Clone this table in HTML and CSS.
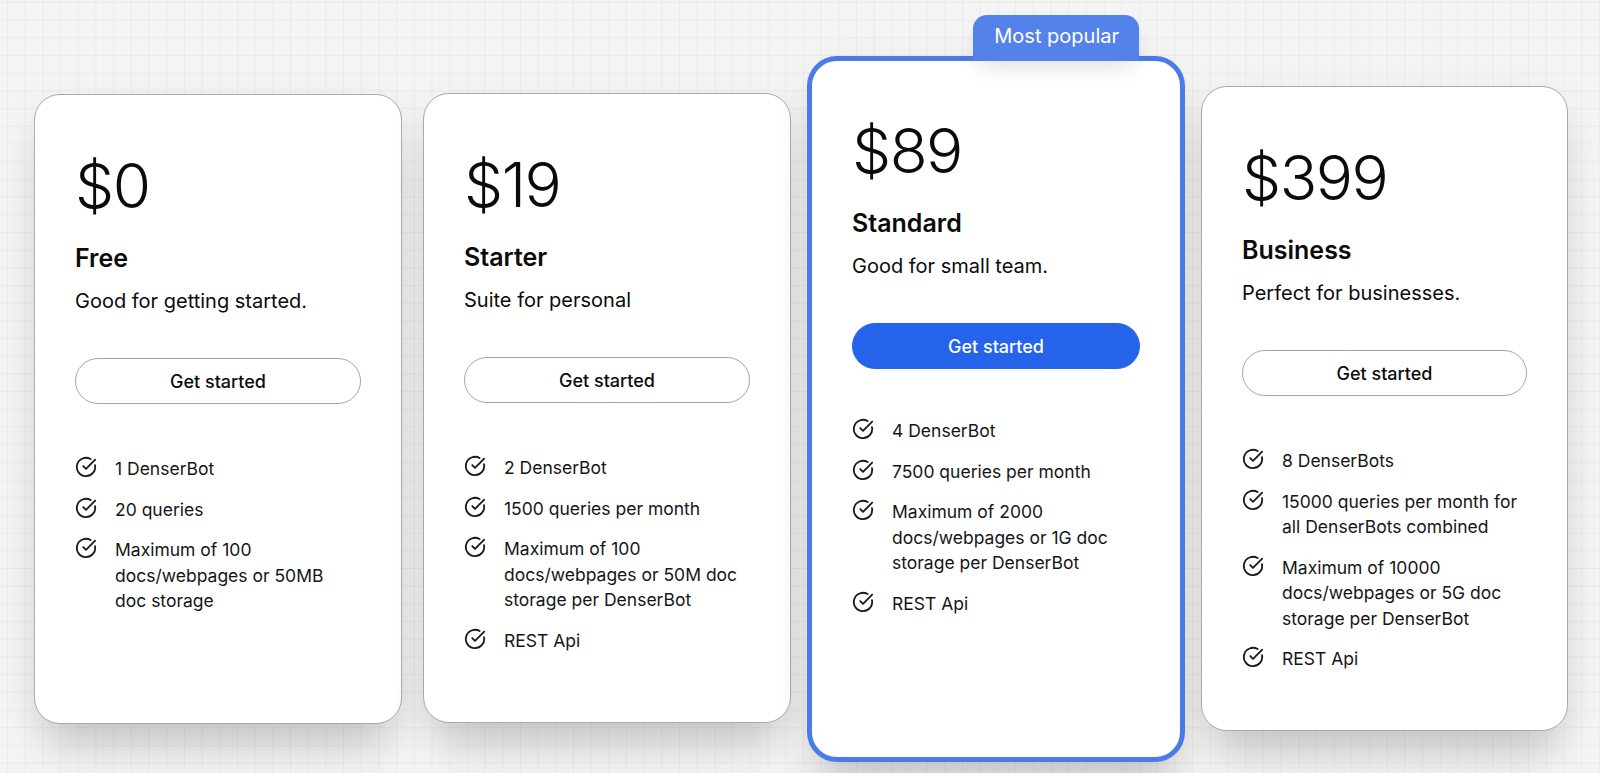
FILE: index.html
```html
<!DOCTYPE html>
<html lang="en">
<head>
<meta charset="utf-8">
<title>Pricing</title>
<link rel="stylesheet" href="styles.css">
</head>
<body>
<svg width="0" height="0" style="position:absolute">
  <symbol id="chk" viewBox="0 0 24 24"><path d="M21.801 10A10 10 0 1 1 17 3.335" fill="none" stroke="currentColor" stroke-width="2" stroke-linecap="round" stroke-linejoin="round"/><path d="m9 11 3 3L22 4" fill="none" stroke="currentColor" stroke-width="2" stroke-linecap="round" stroke-linejoin="round"/></symbol>
</svg>
<main class="plans">
  <section class="card card-free">
    <div class="price">$0</div>
    <h2 class="name">Free</h2>
    <p class="desc">Good for getting started.</p>
    <button class="btn">Get started</button>
    <ul class="features">
      <li><svg class="ic"><use href="#chk"/></svg><span>1 DenserBot</span></li>
      <li><svg class="ic"><use href="#chk"/></svg><span>20 queries</span></li>
      <li><svg class="ic"><use href="#chk"/></svg><span>Maximum of 100 docs/webpages or 50MB doc storage</span></li>
    </ul>
  </section>
  <section class="card card-starter">
    <div class="price">$19</div>
    <h2 class="name">Starter</h2>
    <p class="desc">Suite for personal</p>
    <button class="btn">Get started</button>
    <ul class="features">
      <li><svg class="ic"><use href="#chk"/></svg><span>2 DenserBot</span></li>
      <li><svg class="ic"><use href="#chk"/></svg><span>1500 queries per month</span></li>
      <li><svg class="ic"><use href="#chk"/></svg><span>Maximum of 100 docs/webpages or 50M doc storage per DenserBot</span></li>
      <li><svg class="ic"><use href="#chk"/></svg><span>REST Api</span></li>
    </ul>
  </section>
  <section class="card card-popular">
    <div class="badge">Most popular</div>
    <div class="price">$89</div>
    <h2 class="name">Standard</h2>
    <p class="desc">Good for small team.</p>
    <button class="btn btn-primary">Get started</button>
    <ul class="features">
      <li><svg class="ic"><use href="#chk"/></svg><span>4 DenserBot</span></li>
      <li><svg class="ic"><use href="#chk"/></svg><span>7500 queries per month</span></li>
      <li><svg class="ic"><use href="#chk"/></svg><span>Maximum of 2000 docs/webpages or 1G doc storage per DenserBot</span></li>
      <li><svg class="ic"><use href="#chk"/></svg><span>REST Api</span></li>
    </ul>
  </section>
  <section class="card card-business">
    <div class="price">$399</div>
    <h2 class="name">Business</h2>
    <p class="desc">Perfect for businesses.</p>
    <button class="btn">Get started</button>
    <ul class="features">
      <li><svg class="ic"><use href="#chk"/></svg><span>8 DenserBots</span></li>
      <li><svg class="ic"><use href="#chk"/></svg><span>15000 queries per month for all DenserBots combined</span></li>
      <li><svg class="ic"><use href="#chk"/></svg><span>Maximum of 10000 docs/webpages or 5G doc storage per DenserBot</span></li>
      <li><svg class="ic"><use href="#chk"/></svg><span>REST Api</span></li>
    </ul>
  </section>
</main>
</body>
</html>
```
FILE: styles.css
```css
* { box-sizing: border-box; }
html, body { margin: 0; padding: 0; }
body {
  width: 1600px;
  height: 773px;
  overflow: hidden;
  font-family: Inter, "Noto Sans", "Liberation Sans", sans-serif;
  color: #0b0b0c;
  background-color: #f4f4f4;
  background-image:
    linear-gradient(to right, rgba(0,0,0,0.035) 1px, transparent 1px),
    linear-gradient(to bottom, rgba(0,0,0,0.035) 1px, transparent 1px);
  background-size: 17.7px 17.7px;
  background-position: 7px 2px;
}
.plans {
  display: flex;
  align-items: flex-start;
  gap: 16px;
  padding-left: 34px;
}
.card {
  position: relative;
  width: 368px;
  height: 630px;
  padding: 60px 40px 0;
  background: #fff;
  border: 1px solid #a9a9b0;
  border-radius: 26px;
  box-shadow: 0 36px 44px -14px rgba(0,0,0,0.16), 0 10px 40px rgba(0,0,0,0.06);
}
.card-free { margin-top: 94px; margin-right: 5px; }
.card-starter { margin-top: 93px; }
.card-popular {
  margin-top: 56px;
  width: 378px;
  height: 706px;
  padding-top: 59px;
  border: 5px solid #4b7be6;
  border-radius: 30px;
}
.card-business { margin-top: 86px; width: 367px; height: 645px; }
.badge {
  position: absolute;
  top: -46px;
  right: 41px;
  height: 46px;
  padding: 7px 20px 0 21px;
  background: #5383ea;
  color: #fff;
  font-size: 20px;
  line-height: 28px;
  border-radius: 14px 14px 0 0;
  box-shadow: 0 10px 22px -6px rgba(0,0,0,0.14);
}
.price {
  font-size: 62px;
  line-height: 62px;
  font-weight: 300;
  letter-spacing: -1.5px;
}
.name {
  margin: 26px 0 0;
  font-size: 25px;
  line-height: 30px;
  font-weight: 600;
}
.desc {
  margin: 14px 0 0;
  font-size: 20px;
  line-height: 28px;
}
.btn {
  display: block;
  width: 100%;
  height: 46px;
  margin-top: 43px;
  border: 1px solid #a4a4aa;
  border-radius: 23px;
  background: #fff;
  color: #0b0b0c;
  font-family: inherit;
  font-size: 18px;
  font-weight: 500;
}
.btn-primary {
  background: #2563eb;
  border-color: #2563eb;
  color: #fff;
}
.features {
  list-style: none;
  margin: 52px 0 0;
  padding: 0;
  display: flex;
  flex-direction: column;
  gap: 15px;
}
.card-popular .features { margin-top: 49px; }
.features li {
  display: flex;
  gap: 18px;
  font-size: 17.5px;
  line-height: 25.5px;
  color: #151517;
}
.features span { max-width: 241px; }
.ic {
  flex: none;
  width: 22px;
  height: 22px;
  color: #1a1a1c;
}
```
